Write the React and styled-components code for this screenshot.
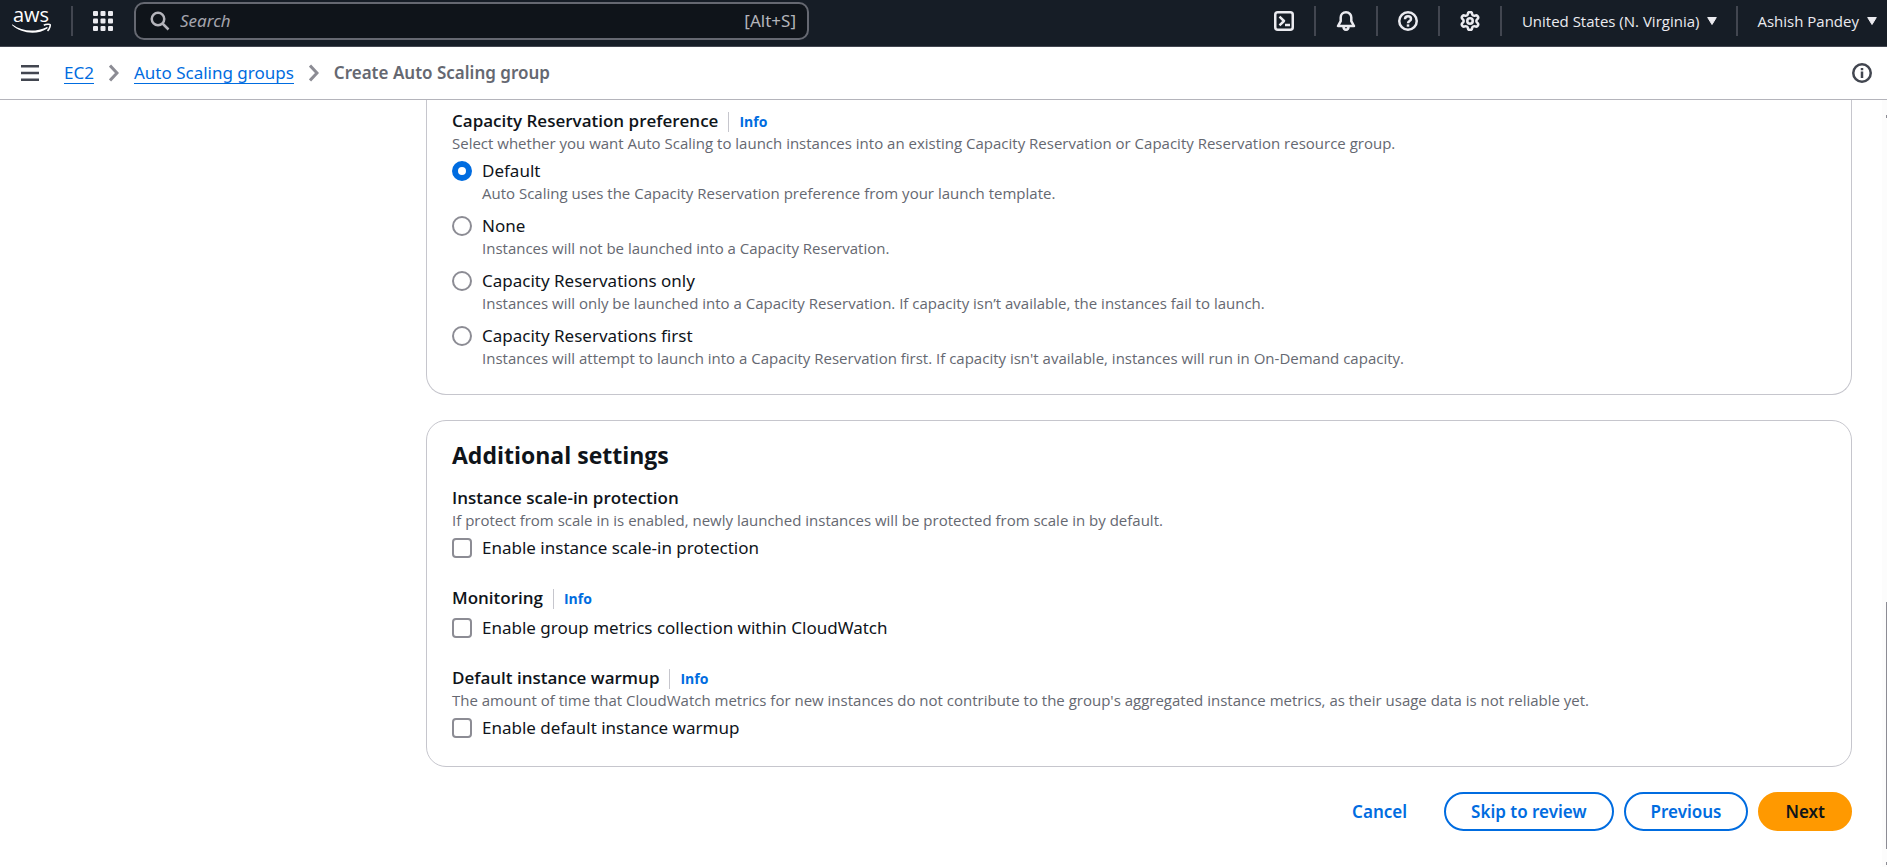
import React, { useState } from "react";
import styled, { createGlobalStyle } from "styled-components";
import { Settings } from "lucide-react";

const color = {
  ink: "#0f141a",
  bar: "#161d26",
  divider: "#424650",
  barIcon: "#ebebf0",
  muted: "#656871",
  control: "#8c8c94",
  line: "#c6c6cd",
  link: "#006ce0",
  accent: "#ff9900",
};

const compactFont = `"Open Sans", "Noto Sans", sans-serif`;

const GlobalStyle = createGlobalStyle`
  *, *::before, *::after { box-sizing: border-box; }
  body {
    margin: 0;
    background: #fff;
    color: ${color.ink};
    font-family: "Noto Sans", "Open Sans", sans-serif;
    font-size: 17px;
    line-height: 24px;
  }
  button, input { font: inherit; color: inherit; }
`;

const Page = styled.div`
  display: flex;
  flex-direction: column;
  min-height: 100vh;
`;

/* ---------- top navigation ---------- */

const TopBar = styled.header`
  display: flex;
  align-items: center;
  height: 47px;
  padding: 0 10px 4px 12px;
  background: ${color.bar};
  border-bottom: 1px solid ${color.divider};
`;

const LogoLink = styled.a`
  display: flex;
`;

const Divider = styled.span`
  flex: none;
  width: 2px;
  height: 30px;
  margin: 0 ${(p) => (p.$tight ? 19 : 20)}px;
  background: ${color.divider};
`;

const IconButton = styled.button`
  display: flex;
  flex: none;
  padding: 0;
  border: 0;
  background: none;
  color: ${(p) => (p.$dark ? color.divider : color.barIcon)};
  cursor: pointer;
`;

const SearchBox = styled.label`
  display: flex;
  align-items: center;
  flex: 0 1 675px;
  height: 38px;
  margin-left: 21px;
  padding: 0 11px 0 14px;
  border: 2px solid ${color.muted};
  border-radius: 10px;
  background: ${color.ink};
  color: #b4b4bb;
`;

const SearchInput = styled.input`
  flex: 1;
  min-width: 0;
  margin-left: 10px;
  padding: 0;
  border: 0;
  outline: 0;
  background: none;
  &::placeholder {
    color: #a4a4ad;
    font-style: italic;
    opacity: 1;
  }
`;

const Utilities = styled.nav`
  display: flex;
  align-items: center;
  margin-left: auto;
`;

const MenuButton = styled.button`
  display: flex;
  align-items: center;
  gap: 8px;
  padding: 0;
  border: 0;
  background: none;
  color: ${color.barIcon};
  font-family: ${compactFont};
  font-size: 15px;
  white-space: nowrap;
  cursor: pointer;
`;

/* ---------- breadcrumbs ---------- */

const CrumbBar = styled.div`
  display: flex;
  align-items: center;
  height: 53px;
  padding: 0 15px 0 21px;
  border-bottom: 1px solid #b4b4bb;
`;

const Crumbs = styled.ol`
  display: flex;
  align-items: center;
  flex: 1;
  gap: 15px;
  margin: 0;
  padding: 0 0 0 25px;
  list-style: none;
`;

const Crumb = styled.li`
  display: flex;
  align-items: center;
  gap: 15px;
  color: ${color.muted};
  font-weight: ${(p) => (p.$current ? 600 : 400)};
`;

const CrumbLink = styled.a`
  color: ${color.link};
  text-decoration: none;
  line-height: 20px;
  border-bottom: 1px solid ${color.link};
`;

/* ---------- content ---------- */

const Body = styled.div`
  display: grid;
  grid-template-columns: 426px minmax(0, 1fr) 5px;
  flex: 1;
`;

const Main = styled.main`
  grid-column: 2;
  display: flex;
  flex-direction: column;
  gap: 25px;
  padding: 0 30px 36px 0;
`;

const Card = styled.section`
  display: flex;
  flex-direction: column;
  gap: 26px;
  padding: ${(p) => (p.$continued ? "9px" : "19px")} 25px 26px;
  border: 1px solid ${color.line};
  border-radius: 20px;
  ${(p) =>
    p.$continued &&
    `
    border-top: 0;
    border-top-left-radius: 0;
    border-top-right-radius: 0;
  `}
`;

const CardTitle = styled.h2`
  margin: 0 0 -10px;
  font-family: ${compactFont};
  font-size: 23px;
  line-height: 30px;
  font-weight: 700;
`;

const FieldGroup = styled.div`
  display: flex;
  flex-direction: column;
`;

const FieldHeading = styled.div`
  display: flex;
  align-items: baseline;
  font-family: ${compactFont};
`;

const FieldTitle = styled.h3`
  margin: 0;
  font-size: 17px;
  font-weight: 600;
  line-height: 24px;
`;

const InfoLink = styled.a`
  margin-left: 10px;
  padding-left: 10px;
  border-left: 1px solid ${color.line};
  color: ${color.link};
  font-size: 14px;
  font-weight: 700;
  line-height: 20px;
  text-decoration: none;
`;

const Hint = styled.p`
  margin: 0;
  color: ${color.muted};
  font-family: ${compactFont};
  font-size: 15px;
  line-height: 20px;
`;

const OptionList = styled.div`
  display: flex;
  flex-direction: column;
  gap: 11px;
  margin-top: 6px;
`;

const OptionRow = styled.div`
  display: grid;
  grid-template-columns: 20px 1fr;
  column-gap: 10px;
  align-items: center;
  & > p { grid-column: 2; }
`;

const OptionLabel = styled.label`
  justify-self: start;
`;

const Radio = styled.input.attrs({ type: "radio" })`
  appearance: none;
  width: 20px;
  height: 20px;
  margin: 0;
  border: 2px solid ${color.control};
  border-radius: 50%;
  background: #fff;
  &:checked { border: 6px solid ${color.link}; }
`;

const Checkbox = styled.input.attrs({ type: "checkbox" })`
  appearance: none;
  width: 20px;
  height: 20px;
  margin: 0;
  border: 2px solid ${color.control};
  border-radius: 4px;
  background: #fff;
  &:checked { background: ${color.link}; border-color: ${color.link}; }
`;

const Actions = styled.div`
  display: flex;
  justify-content: flex-end;
  gap: 10px;
`;

const buttonLook = {
  link: ["transparent", "transparent", color.link],
  normal: ["#fff", color.link, color.link],
  primary: [color.accent, color.accent, color.ink],
};

const ActionButton = styled.button`
  height: 39px;
  padding: 0 25px;
  border: 2px solid ${(p) => buttonLook[p.$look][1]};
  border-radius: 20px;
  background: ${(p) => buttonLook[p.$look][0]};
  color: ${(p) => buttonLook[p.$look][2]};
  font-weight: 600;
  line-height: 20px;
  white-space: nowrap;
  cursor: pointer;
`;

const ScrollTrack = styled.div`
  grid-column: 3;
  display: flex;
  flex-direction: column;
  align-items: flex-end;
  justify-content: space-between;
  padding: 15px 0 2px;
  background: #fcfcfc;
`;

const ScrollArrow = styled.span`
  width: 1px;
  height: 3px;
  background: ${color.control};
`;

const ScrollThumb = styled.span`
  width: 1px;
  height: 247px;
  margin: auto 0 13px;
  background: ${color.control};
`;

/* ---------- icons ---------- */

const stroke = {
  fill: "none",
  stroke: "currentColor",
  strokeWidth: 2.5,
  strokeLinejoin: "round",
};

const AwsLogo = () => (
  <svg width="39" height="42" viewBox="0 0 39 42" role="img" aria-label="AWS">
    <text x="1" y="22" fill="#fff" fontFamily="Open Sans" fontSize="20" fontWeight="500">aws</text>
    <g transform="translate(0 6)">
      <path d="M0.500 18.500C10 25.500 23 26.500 34.500 21.200c1-.4 1.600.6.8 1.300C26 29 9.500 28 .2 19.300c-.5-.5-.2-1 .3-.8z" fill="#fff" />
      <path d="M31.800 19.300c2.800-1.500 6-1.200 6.300-.7s0 3.800-2.600 6.200" fill="none" stroke="#fff" strokeWidth="1.600" />
    </g>
  </svg>
);

const GridIcon = () => (
  <svg width="20" height="20" viewBox="0 0 20 20" fill="currentColor">
    {[0, 7.5, 15].map((y) =>
      [0, 7.5, 15].map((x) => <rect key={`${x}-${y}`} x={x} y={y} width="5" height="5" rx="1" />)
    )}
  </svg>
);

const SearchIcon = () => (
  <svg width="20" height="20" viewBox="0 0 20 20" {...stroke}>
    <circle cx="8" cy="8" r="6.250" />
    <path d="M12.500 12.500 18.500 18.500" />
  </svg>
);

const TerminalIcon = () => (
  <svg width="20" height="20" viewBox="0 0 20 20" {...stroke}>
    <rect x="1.250" y="1.250" width="17.500" height="17.500" rx="2.500" />
    <path d="M5.500 5.700 10 10l-4.500 4.300M11 14h5" />
  </svg>
);

const BellIcon = () => (
  <svg width="20" height="20" viewBox="0 0 20 20" {...stroke}>
    <path d="M10 1.300c-3.300 0-5.300 2.400-5.300 5.300v3.600L2 15h16l-2.700-4.800V6.600c0-2.900-2-5.300-5.300-5.300z" />
    <path d="M7.500 15.500c0 1.800 1 3.200 2.500 3.200s2.500-1.400 2.500-3.200" />
  </svg>
);

const HelpIcon = () => (
  <svg width="20" height="20" viewBox="0 0 20 20" {...stroke}>
    <circle cx="10" cy="10" r="8.750" />
    <path d="M7 8.200c0-2 1.300-3 3-3s3 1.100 3 2.700c0 2.200-3 2-3 4.400" />
    <path d="M10 13.400v2.300" />
  </svg>
);

const InfoIcon = () => (
  <svg width="20" height="20" viewBox="0 0 20 20" {...stroke}>
    <circle cx="10" cy="10" r="8.750" />
    <path d="M10 8.500v6.500M10 5v2.300" />
  </svg>
);

const MenuIcon = () => (
  <svg width="18" height="16" viewBox="0 0 18 16" fill="currentColor">
    <path d="M0 0h18v2.500H0zM0 6.750h18v2.500H0zM0 13.500h18v2.500H0z" />
  </svg>
);

const ChevronIcon = () => (
  <svg width="10" height="18" viewBox="0 0 10 18" fill="none" stroke={color.control} strokeWidth="3">
    <path d="M1 1.500 8 9 1 16.500" />
  </svg>
);

const CaretIcon = () => (
  <svg width="10" height="8" viewBox="0 0 10 8" fill="currentColor" stroke="currentColor" strokeLinejoin="round">
    <path d="M.7.5h8.600L5 7.500z" />
  </svg>
);

/* ---------- data ---------- */

const utilities = [
  ["CloudShell", <TerminalIcon />],
  ["Notifications", <BellIcon />],
  ["Help", <HelpIcon />],
  ["Settings", <Settings size={20} viewBox="1 1 22 22" strokeWidth={2.8} />],
];

const reservationOptions = [
  ["default", "Default", "Auto Scaling uses the Capacity Reservation preference from your launch template."],
  ["none", "None", "Instances will not be launched into a Capacity Reservation."],
  ["only", "Capacity Reservations only", "Instances will only be launched into a Capacity Reservation. If capacity isn’t available, the instances fail to launch."],
  ["first", "Capacity Reservations first", "Instances will attempt to launch into a Capacity Reservation first. If capacity isn't available, instances will run in On-Demand capacity."],
];

const settings = [
  {
    id: "scale-in",
    title: "Instance scale-in protection",
    hint: "If protect from scale in is enabled, newly launched instances will be protected from scale in by default.",
    label: "Enable instance scale-in protection",
  },
  {
    id: "monitoring",
    title: "Monitoring",
    info: true,
    label: "Enable group metrics collection within CloudWatch",
  },
  {
    id: "warmup",
    title: "Default instance warmup",
    info: true,
    hint: "The amount of time that CloudWatch metrics for new instances do not contribute to the group's aggregated instance metrics, as their usage data is not reliable yet.",
    label: "Enable default instance warmup",
  },
];

function Field({ title, info, hint, children }) {
  return (
    <FieldGroup>
      <FieldHeading>
        <FieldTitle>{title}</FieldTitle>
        {info && <InfoLink href="#info">Info</InfoLink>}
      </FieldHeading>
      {hint && <Hint>{hint}</Hint>}
      <OptionList>{children}</OptionList>
    </FieldGroup>
  );
}

export default function App() {
  const [preference, setPreference] = useState("default");

  return (
    <Page>
      <GlobalStyle />
      <TopBar>
        <LogoLink href="#home"><AwsLogo /></LogoLink>
        <Divider />
        <IconButton aria-label="Services"><GridIcon /></IconButton>
        <SearchBox>
          <SearchIcon />
          <SearchInput type="text" placeholder="Search" aria-label="Search" />
          <span>[Alt+S]</span>
        </SearchBox>
        <Utilities>
          {utilities.map(([name, icon]) => (
            <React.Fragment key={name}>
              <IconButton aria-label={name}>{icon}</IconButton>
              <Divider />
            </React.Fragment>
          ))}
          <MenuButton>United States (N. Virginia)<CaretIcon /></MenuButton>
          <Divider $tight />
          <MenuButton>Ashish Pandey<CaretIcon /></MenuButton>
        </Utilities>
      </TopBar>

      <CrumbBar>
        <IconButton $dark aria-label="Open navigation"><MenuIcon /></IconButton>
        <Crumbs>
          <Crumb><CrumbLink href="#ec2">EC2</CrumbLink><ChevronIcon /></Crumb>
          <Crumb><CrumbLink href="#groups">Auto Scaling groups</CrumbLink><ChevronIcon /></Crumb>
          <Crumb $current>Create Auto Scaling group</Crumb>
        </Crumbs>
        <IconButton $dark aria-label="Open info panel"><InfoIcon /></IconButton>
      </CrumbBar>

      <Body>
        <Main>
          <Card $continued>
            <Field
              title="Capacity Reservation preference"
              info
              hint="Select whether you want Auto Scaling to launch instances into an existing Capacity Reservation or Capacity Reservation resource group."
            >
              {reservationOptions.map(([value, label, text]) => (
                <OptionRow key={value}>
                  <Radio
                    id={`pref-${value}`}
                    name="preference"
                    checked={preference === value}
                    onChange={() => setPreference(value)}
                  />
                  <OptionLabel htmlFor={`pref-${value}`}>{label}</OptionLabel>
                  <Hint>{text}</Hint>
                </OptionRow>
              ))}
            </Field>
          </Card>

          <Card>
            <CardTitle>Additional settings</CardTitle>
            {settings.map(({ id, label, ...field }) => (
              <Field key={id} {...field}>
                <OptionRow>
                  <Checkbox id={id} />
                  <OptionLabel htmlFor={id}>{label}</OptionLabel>
                </OptionRow>
              </Field>
            ))}
          </Card>

          <Actions>
            <ActionButton $look="link">Cancel</ActionButton>
            <ActionButton $look="normal">Skip to review</ActionButton>
            <ActionButton $look="normal">Previous</ActionButton>
            <ActionButton $look="primary">Next</ActionButton>
          </Actions>
        </Main>
        <ScrollTrack aria-hidden="true">
          <ScrollArrow />
          <ScrollThumb />
          <ScrollArrow />
        </ScrollTrack>
      </Body>
    </Page>
  );
}
